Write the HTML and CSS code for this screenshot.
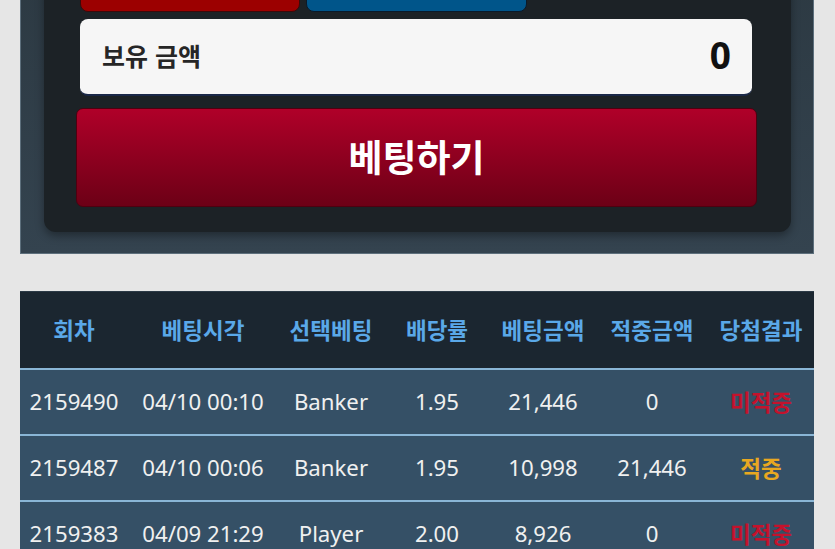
FILE: index.html
```html
<!DOCTYPE html>
<html lang="ko">
<head>
<meta charset="utf-8">
<link rel="stylesheet" href="styles.css">
</head>
<body>
<div class="page">
  <section class="outer">
    <div class="inner">
      <div class="choices">
        <div class="choice red"></div>
        <div class="choice blue"></div>
        <div class="choice empty"></div>
      </div>
      <div class="balance">
        <span class="label">보유 금액</span>
        <span class="amount">0</span>
      </div>
      <button class="bet">베팅하기</button>
    </div>
  </section>

  <table class="history">
    <colgroup>
      <col style="width:108px"><col style="width:150px"><col style="width:106px"><col style="width:106px"><col style="width:106px"><col style="width:112px"><col style="width:106px">
    </colgroup>
    <thead>
      <tr><th>회차</th><th>베팅시각</th><th>선택베팅</th><th>배당률</th><th>베팅금액</th><th>적중금액</th><th>당첨결과</th></tr>
    </thead>
    <tbody>
      <tr><td>2159490</td><td>04/10 00:10</td><td>Banker</td><td>1.95</td><td>21,446</td><td>0</td><td class="lose">미적중</td></tr>
      <tr><td>2159487</td><td>04/10 00:06</td><td>Banker</td><td>1.95</td><td>10,998</td><td>21,446</td><td class="win">적중</td></tr>
      <tr><td>2159383</td><td>04/09 21:29</td><td>Player</td><td>2.00</td><td>8,926</td><td>0</td><td class="lose">미적중</td></tr>
    </tbody>
  </table>
</div>
</body>
</html>
```

FILE: styles.css
```css
html, body {
  margin: 0;
  padding: 0;
  background: #e6e6e6;
  overflow: hidden;
}
body {
  font-family: "Noto Sans", "Noto Sans CJK KR", sans-serif;
}
.page {
  padding: 0 21px 0 20px;
  margin-top: -38px;
}
.outer {
  background: linear-gradient(#2c3942, #34434f);
  border: 1px solid #5d6f7c;
  border-top: none;
  padding: 0 22px 21px 23px;
}
.inner {
  background: #1c2226;
  border-radius: 0 0 12px 12px;
  box-shadow: 0 4px 8px rgba(0,0,0,0.35);
  padding: 0 34px 25px 32px;
}
.choices {
  display: grid;
  grid-template-columns: repeat(3, 1fr);
  gap: 6px;
  padding: 0 4px 0 4px;
}
.choice {
  height: 50px;
  border-radius: 8px;
  box-sizing: border-box;
}
.choice.red {
  background: #9c0000;
  border: 1px solid #3a0a0a;
}
.choice.blue {
  background: #00558a;
  border: 1px solid #0a1a2a;
}
.choice.empty {
  visibility: hidden;
}
.balance {
  margin: 7px 5px 0 4px;
  height: 77px;
  box-sizing: border-box;
  background: #f6f6f6;
  border-radius: 8px;
  border-bottom: 2px solid #1a2848;
  display: flex;
  align-items: center;
  justify-content: space-between;
  padding: 0 21px 4px 22px;
}
.balance .label {
  font-family: "Noto Sans CJK KR", sans-serif;
  font-weight: 700;
  font-size: 25px;
  color: #262626;
}
.balance .amount {
  font-family: "Noto Sans", sans-serif;
  font-weight: 700;
  font-size: 37px;
  color: #111;
}
.bet {
  display: block;
  width: 100%;
  margin-top: 12px;
  height: 99px;
  border: 1px solid #4e0010;
  border-radius: 7px;
  background: linear-gradient(#b00029, #6c0016);
  color: #ffffff;
  font-family: "Noto Sans CJK KR", sans-serif;
  font-weight: 700;
  font-size: 37px;
  padding: 0 0 4px 0;
}
.history {
  margin-top: 37px;
  width: 794px;
  border-collapse: collapse;
  table-layout: fixed;
  font-family: "Noto Sans", "Noto Sans CJK KR", sans-serif;
}
.history th {
  background: #1b2630;
  color: #5aa8e8;
  font-family: "Noto Sans CJK KR", sans-serif;
  font-weight: 700;
  font-size: 22.5px;
  height: 74px;
  padding: 0 0 2px 0;
  border-bottom: 2px solid #8ab6d6;
  border-top: 1px solid #2c3a46;
}
.history td {
  background: #355066;
  color: #f0f0f0;
  font-size: 22.2px;
  text-align: center;
  height: 62px;
  padding: 0 0 2px 0;
  border-bottom: 2px solid #8ab6d6;
  white-space: nowrap;
}
.history td.lose {
  color: #c4122c;
  font-family: "Noto Sans CJK KR", sans-serif;
  font-weight: 700;
  font-size: 22.5px;
}
.history td.win {
  color: #e8a821;
  font-family: "Noto Sans CJK KR", sans-serif;
  font-weight: 700;
  font-size: 22.5px;
}
```
